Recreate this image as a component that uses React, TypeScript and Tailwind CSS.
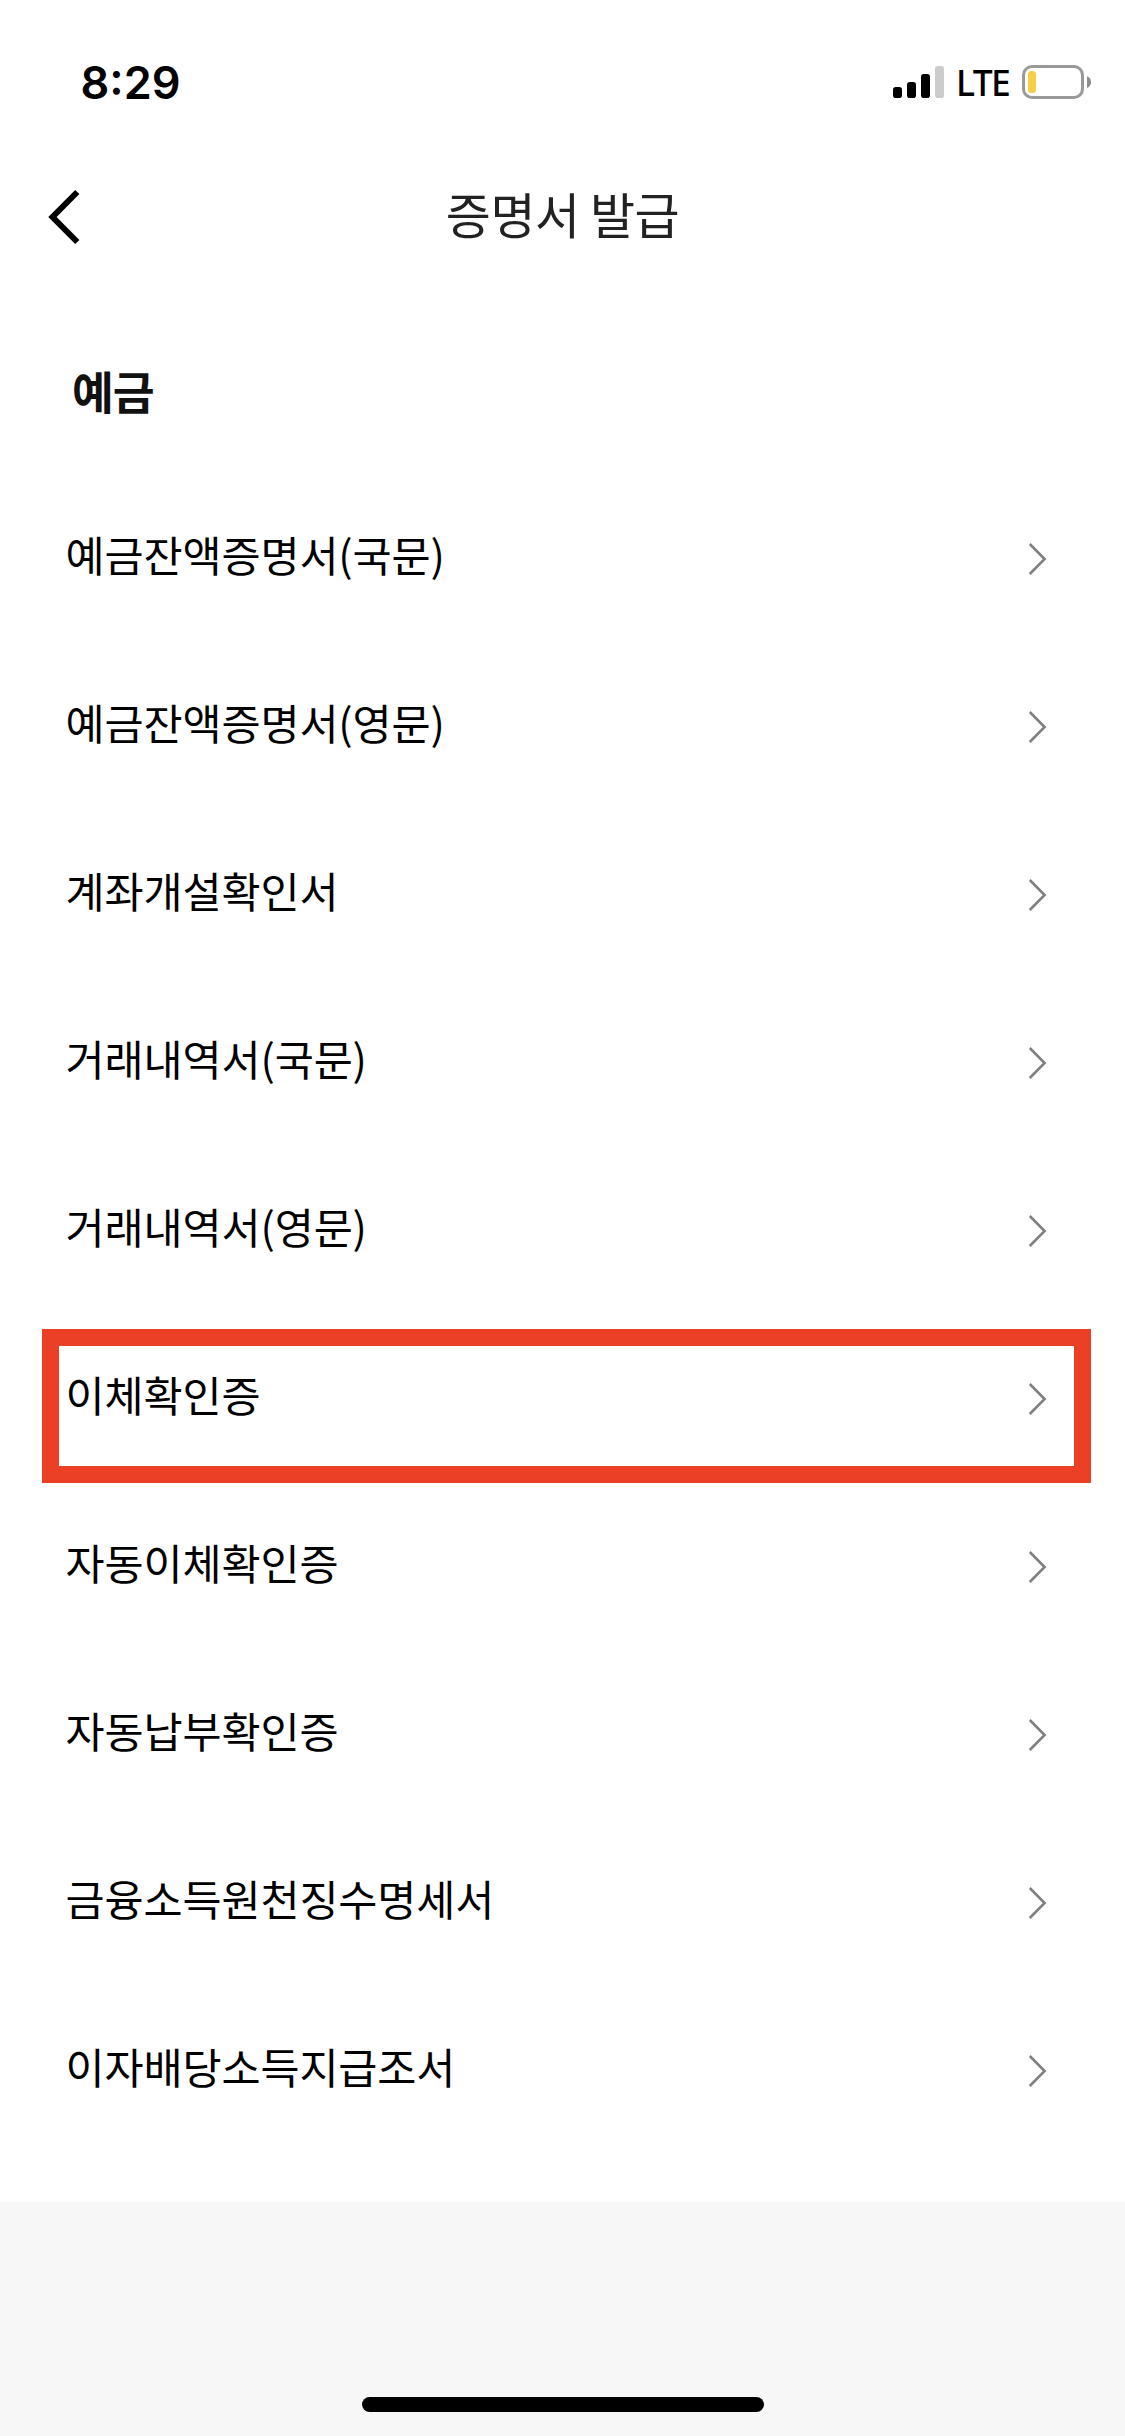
const certificates = [
  { name: '예금잔액증명서(국문)' },
  { name: '예금잔액증명서(영문)' },
  { name: '계좌개설확인서' },
  { name: '거래내역서(국문)' },
  { name: '거래내역서(영문)' },
  { name: '이체확인증', highlighted: true },
  { name: '자동이체확인증' },
  { name: '자동납부확인증' },
  { name: '금융소득원천징수명세서' },
  { name: '이자배당소득지급조서' },
];

function SignalIcon() {
  return (
    <svg width="51" height="32" viewBox="0 0 51 32">
      <rect x="0" y="21" width="9" height="11" rx="2.8" fill="#000" />
      <rect x="14" y="16" width="9" height="16" rx="2.8" fill="#000" />
      <rect x="28" y="8" width="9" height="24" rx="2.8" fill="#000" />
      <rect x="42" y="0" width="9" height="32" rx="2.8" fill="#ccc" />
    </svg>
  );
}

function BatteryIcon() {
  return (
    <svg width="69" height="34" viewBox="0 0 69 34">
      <rect x="1.5" y="1.5" width="59" height="31" rx="8.5" fill="none" stroke="#999" strokeWidth="3" />
      <rect x="6" y="6" width="8" height="22" rx="3.5" fill="#f7ce46" />
      <path d="M65 11.3C67.5 12.3 69 14.5 69 17.2C69 19.9 67.5 22 65 23Z" fill="#8c8c8c" />
    </svg>
  );
}

function StatusBar() {
  return (
    <div className="h-[132px] pt-8 pl-[80.5px] pr-[34px] flex items-center justify-between">
      <span className="font-['Inter',sans-serif] text-[45px] leading-none font-semibold">8:29</span>
      <div className="flex items-center">
        <SignalIcon />
        <span className="ml-3 pt-px w-[66px] whitespace-nowrap font-['Noto_Sans',sans-serif] text-[35.5px] leading-none font-medium tracking-[-1.6px]">
          LTE
        </span>
        <BatteryIcon />
      </div>
    </div>
  );
}

function Header() {
  return (
    <header className="h-[160px] grid grid-cols-[120px_1fr_120px] items-center">
      <button className="pl-12 pt-[9px]" aria-label="뒤로">
        <svg width="34" height="56" viewBox="0 0 34 56">
          <path d="M29.3 3L4.5 28L29.3 53" fill="none" stroke="#000" strokeWidth="6" />
        </svg>
      </button>
      <h1 className="text-center text-[49px] leading-none tracking-[-0.5px] text-[#222]">증명서 발급</h1>
    </header>
  );
}

function ChevronIcon() {
  return (
    <svg width="20" height="34" viewBox="0 0 20 34">
      <path d="M1.8 2L16.6 17L1.8 32" fill="none" stroke="#808080" strokeWidth="2.6" />
    </svg>
  );
}

export default function App() {
  return (
    <div className="w-[1125px] h-[2436px] flex flex-col bg-white text-black font-['Noto_Sans_CJK_KR',sans-serif]">
      <StatusBar />
      <Header />

      <section className="h-[1910px] shrink-0">
        <h2 className="h-[178px] pt-5 pl-[72px] flex items-center text-[45.5px] leading-none tracking-[-1.2px] font-bold text-[#111]">
          예금
        </h2>
        <ul>
          {certificates.map((item) => (
            <li key={item.name} className="relative h-[168px] pl-[65.5px] pr-[77px] flex items-center justify-between">
              <span className="text-[42.5px] leading-none tracking-[-0.12px]">{item.name}</span>
              <span className="pt-[9px]">
                <ChevronIcon />
              </span>
              {item.highlighted && (
                <div className="absolute left-[42px] top-[19px] w-[1049px] h-[154px] border-[17px] border-[#eb4025]" />
              )}
            </li>
          ))}
        </ul>
      </section>

      <footer className="flex-1 pb-6 flex items-end justify-center bg-[#f7f7f7]">
        <div className="w-[402px] h-[15px] ml-px rounded-full bg-black" />
      </footer>
    </div>
  );
}
